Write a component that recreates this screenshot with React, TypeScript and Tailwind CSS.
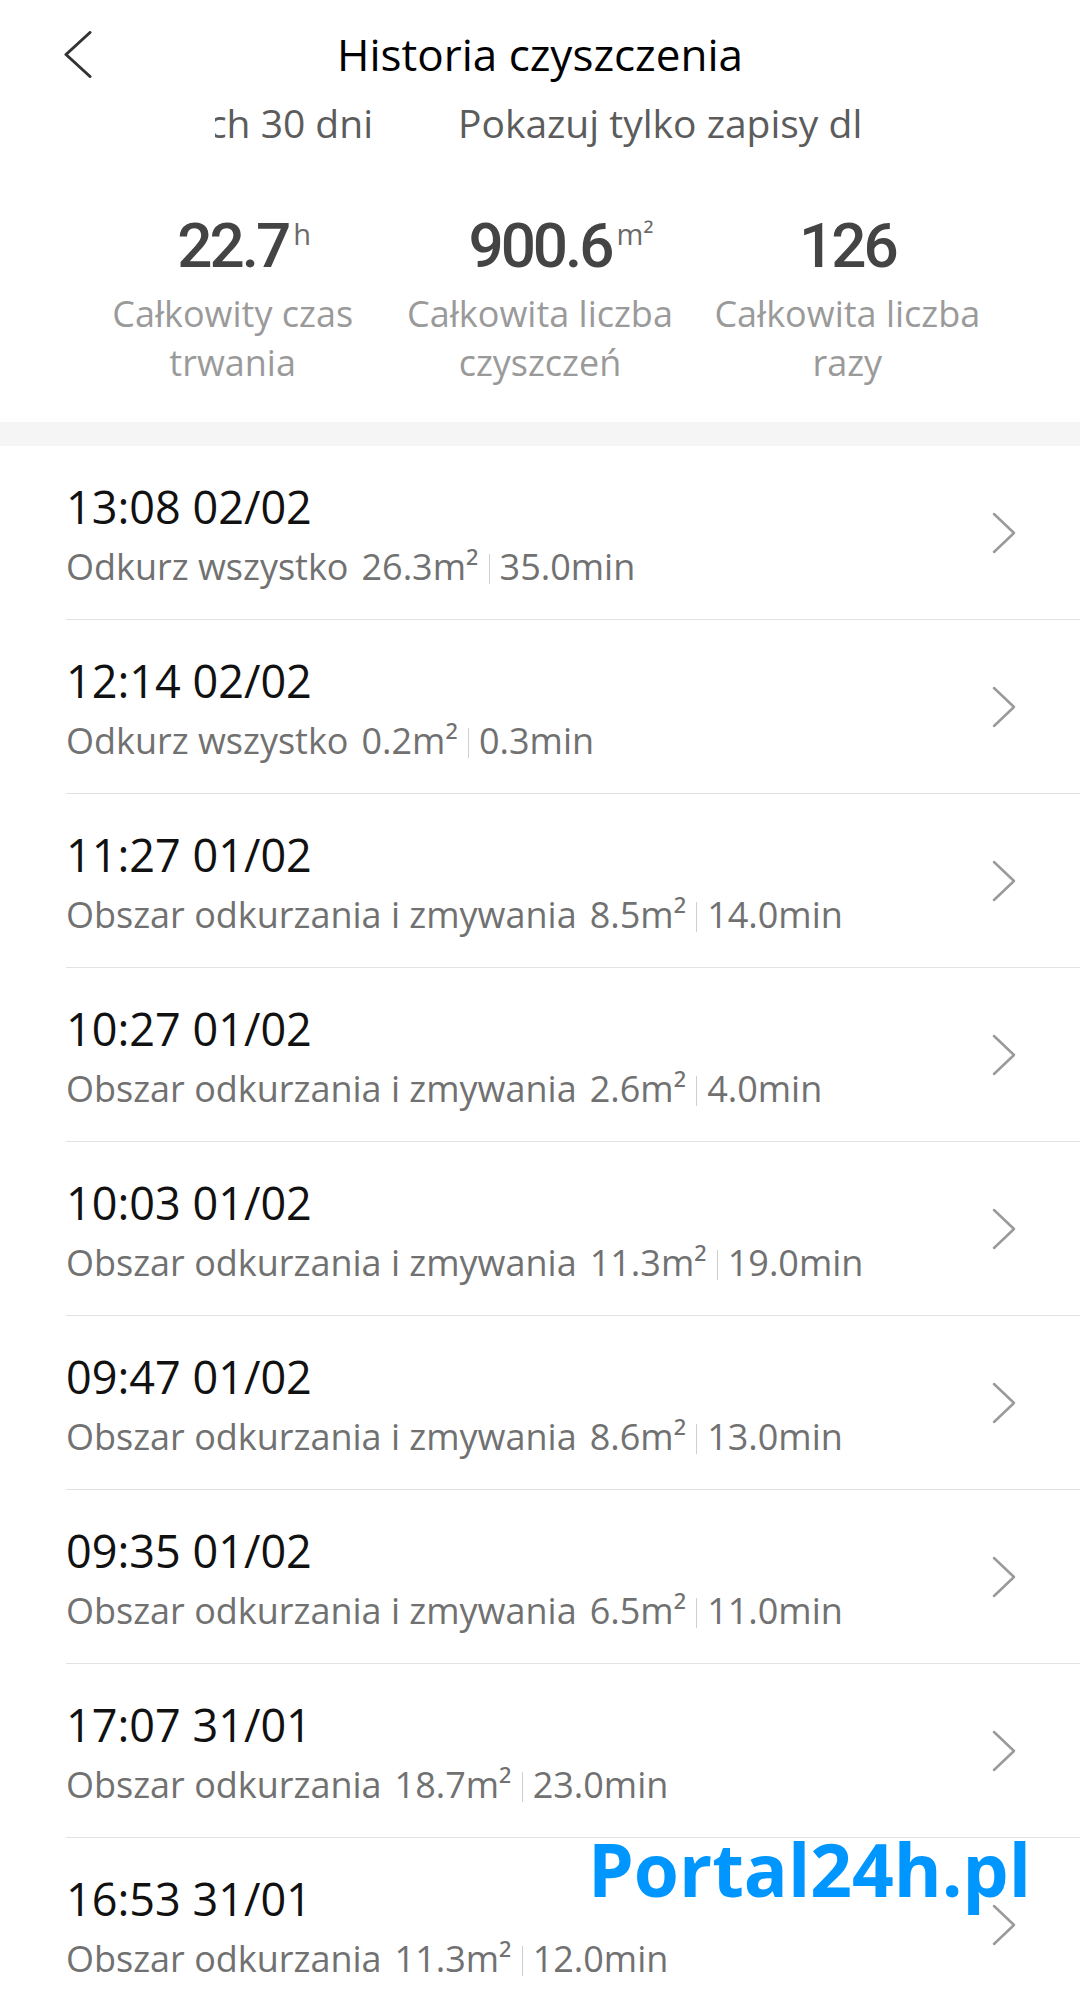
import React from "react";

const rows = [
  { t: "13:08 02/02", l: "Odkurz wszystko", a: "26.3", m: "35.0" },
  { t: "12:14 02/02", l: "Odkurz wszystko", a: "0.2", m: "0.3" },
  { t: "11:27 01/02", l: "Obszar odkurzania i zmywania", a: "8.5", m: "14.0" },
  { t: "10:27 01/02", l: "Obszar odkurzania i zmywania", a: "2.6", m: "4.0" },
  { t: "10:03 01/02", l: "Obszar odkurzania i zmywania", a: "11.3", m: "19.0" },
  { t: "09:47 01/02", l: "Obszar odkurzania i zmywania", a: "8.6", m: "13.0" },
  { t: "09:35 01/02", l: "Obszar odkurzania i zmywania", a: "6.5", m: "11.0" },
  { t: "17:07 31/01", l: "Obszar odkurzania", a: "18.7", m: "23.0" },
  { t: "16:53 31/01", l: "Obszar odkurzania", a: "11.3", m: "12.0" },
  { t: "16:20 31/01", l: "Obszar odkurzania", a: "9.4", m: "10.0" },
];

const stats = [
  { v: "22.7", u: "h", l: "Całkowity czas trwania" },
  { v: "900.6", u: "m²", l: "Całkowita liczba czyszczeń" },
  { v: "126", u: "", l: "Całkowita liczba razy" },
];

export default function App() {
  return (
    <div
      className="relative w-[1080px] h-[2002px] overflow-hidden bg-white"
      style={{ fontFamily: '"Open Sans", "Noto Sans", sans-serif' }}
    >
      {/* Header */}
      <div className="grid grid-cols-[1fr_auto_1fr] items-center pt-[24px]">
        <div className="pl-[64px] flex items-center">
          <svg width="28" height="47" viewBox="0 0 28 47" fill="none">
            <polyline
              points="26,1.5 2,23.5 26,45.5"
              stroke="#333333"
              strokeWidth="3"
              strokeLinecap="round"
              strokeLinejoin="round"
            />
          </svg>
        </div>
        <div className="text-[44px] leading-[60px] text-black whitespace-nowrap">
          Historia czyszczenia
        </div>
        <div />
      </div>

      {/* Tabs (scrolled) */}
      <div className="mt-[12px] flex pl-[215px] text-[39px] leading-[54px] text-[#5c5c5c] whitespace-nowrap">
        <div className="w-[158px] overflow-hidden flex justify-end">
          <span>Z ostatnich 30 dni</span>
        </div>
        <div className="ml-[85px] w-[403px] overflow-hidden">
          <span>Pokazuj tylko zapisy dla urządzenia</span>
        </div>
      </div>

      {/* Stats */}
      <div className="mt-[60px] grid grid-cols-3 px-[79px] pb-[35px]">
        {stats.map((s) => (
          <div key={s.v} className="flex flex-col items-center">
            <div className="relative">
              <span
                className="text-[62px] leading-[72px] font-medium text-[#444444] tracking-[-3px]"
                style={{ fontFamily: 'Roboto, "Open Sans", sans-serif' }}
              >
                {s.v}
              </span>
              {s.u && (
                <span className="absolute left-full top-[9px] ml-[5px] text-[29px] leading-[30px] text-[#6a6a6a] whitespace-nowrap">
                  {s.u}
                </span>
              )}
            </div>
            <div className="mt-[7px] text-center text-[36px] leading-[49px] text-[#9a9a9a]">
              {s.l}
            </div>
          </div>
        ))}
      </div>

      {/* Band */}
      <div className="h-[24px] bg-[#f5f5f5]" />

      {/* Rows */}
      <div className="flex flex-col">
        {rows.map((r) => (
          <div
            key={r.t}
            className="ml-[66px] flex items-center border-b border-[#e3e3e3] h-[174px]"
          >
            <div className="flex-1 flex flex-col pt-[4px]">
              <div className="text-[45px] leading-[60px] text-[#111111]">{r.t}</div>
              <div className="mt-[5px] flex items-center text-[36px] leading-[50px] text-[#717171] whitespace-nowrap">
                <span>{r.l}</span>
                <span className="ml-[13px]">{r.a}m²</span>
                <span className="mx-[10px] w-px h-[30px] bg-[#cfcfcf] mt-[4px]" />
                <span>{r.m}min</span>
              </div>
            </div>
            <div className="mr-[64px] flex items-center">
              <svg width="24" height="42" viewBox="0 0 24 42" fill="none">
                <polyline
                  points="2,2 22,21 2,40"
                  stroke="#9a9a9a"
                  strokeWidth="2.5"
                  strokeLinecap="round"
                  strokeLinejoin="round"
                />
              </svg>
            </div>
          </div>
        ))}
      </div>

      {/* Watermark */}
      <div
        className="absolute left-[588px] top-[1832px] text-[73px] leading-[74px] font-bold text-[#0096ff] whitespace-nowrap"
        style={{ fontFamily: '"Open Sans", sans-serif' }}
      >
        Portal24h.pl
      </div>
    </div>
  );
}
